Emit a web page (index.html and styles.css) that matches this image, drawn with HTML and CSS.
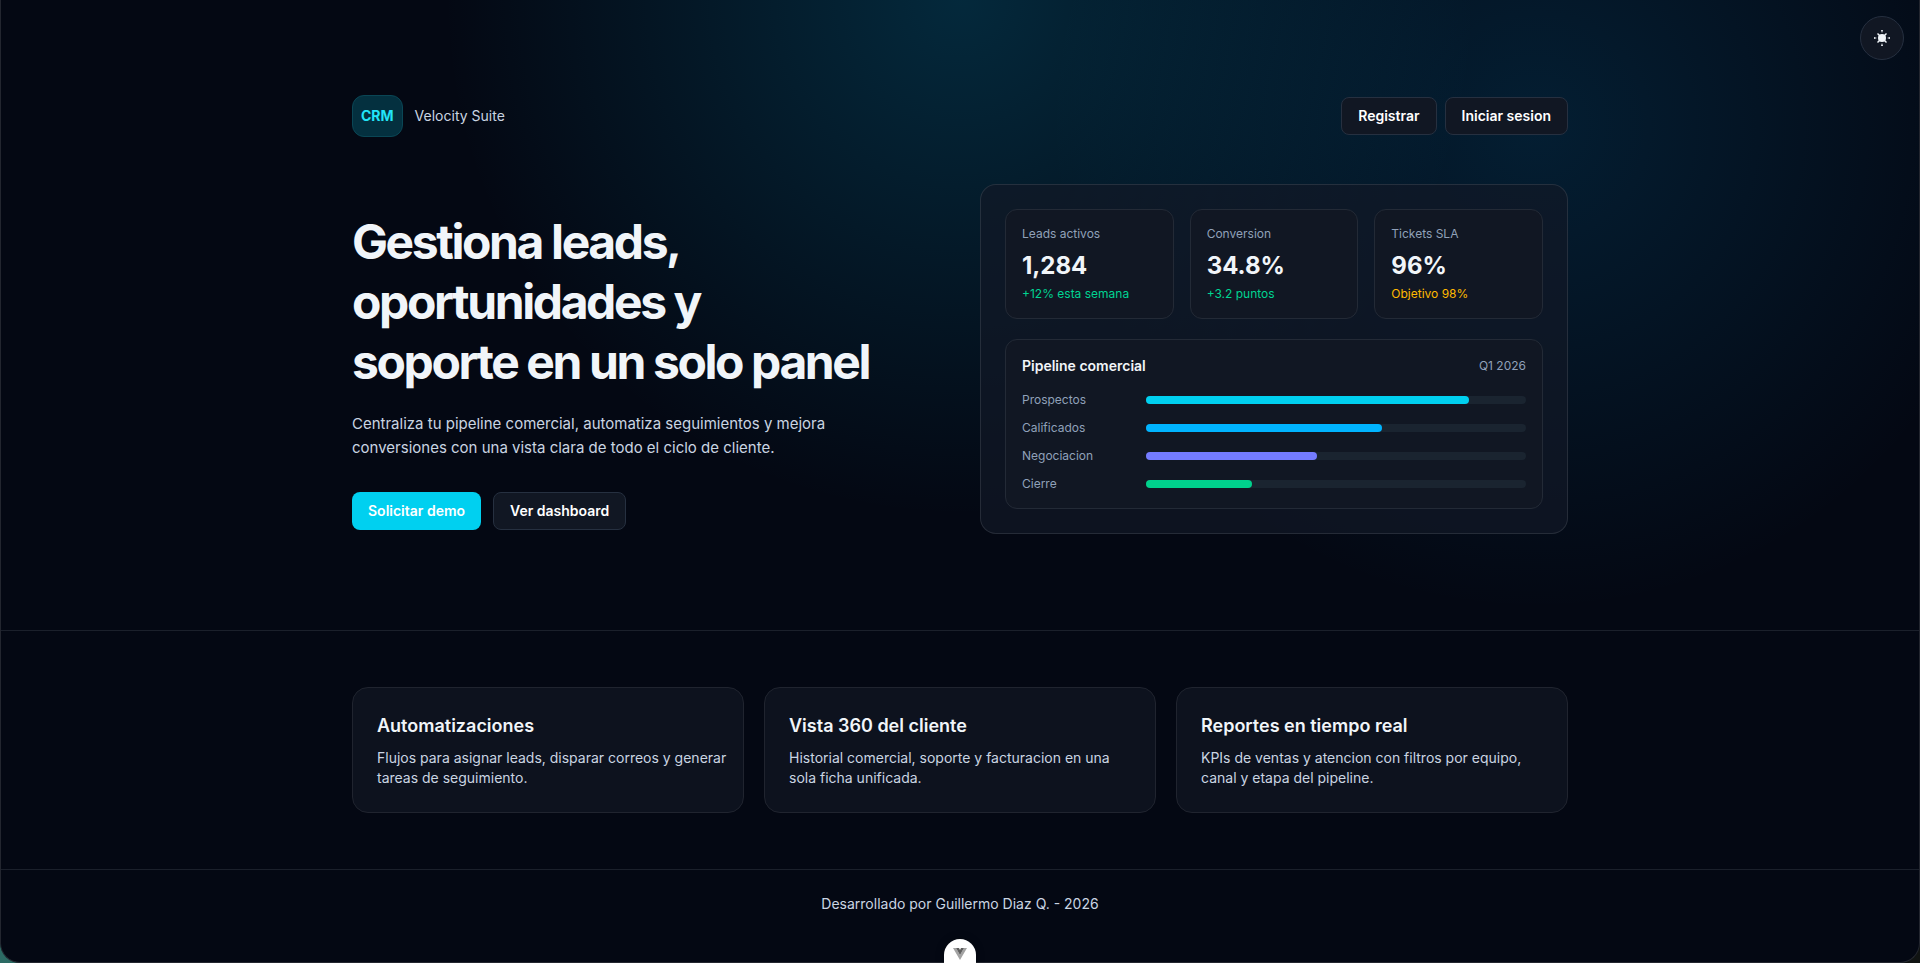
FILE: index.html
```html
<!DOCTYPE html>
<html lang="es">
<head>
    <meta charset="UTF-8">
    <meta name="viewport" content="width=device-width, initial-scale=1.0">
    <title>Velocity Suite CRM</title>
    <link rel="stylesheet" href="styles.css">
</head>
<body>
    <div class="page">
        <button class="theme-toggle" type="button" aria-label="Cambiar tema">
            <svg width="18" height="18" viewBox="0 0 18 18" fill="currentColor" aria-hidden="true">
                <circle cx="9" cy="9" r="4"/>
                <path d="M8 1h2l-1 3zM8 17h2l-1-3zM1 8v2l3-1zM17 8v2l-3-1zM4 5l1-1 2 2-1 1zM14 5l-1-1-2 2 1 1zM4 13l1 1 2-2-1-1zM14 13l-1 1-2-2 1-1z"/>
            </svg>
        </button>

        <section class="hero">
            <div class="container">
                <header class="header">
                    <div class="brand">
                        <span class="brand-badge">CRM</span>
                        <span class="brand-name">Velocity Suite</span>
                    </div>
                    <nav class="header-actions">
                        <a class="btn btn-outline" href="#">Registrar</a>
                        <a class="btn btn-outline" href="#">Iniciar sesion</a>
                    </nav>
                </header>

                <div class="hero-grid">
                    <div class="hero-text">
                        <h1>Gestiona leads, oportunidades y<br>soporte en un solo panel</h1>
                        <p>Centraliza tu pipeline comercial, automatiza seguimientos y mejora conversiones con una vista clara de todo el ciclo de cliente.</p>
                        <div class="hero-actions">
                            <button class="btn btn-primary" type="button">Solicitar demo</button>
                            <button class="btn btn-outline" type="button">Ver dashboard</button>
                        </div>
                    </div>

                    <div class="panel">
                        <div class="stats">
                            <div class="stat">
                                <p class="stat-label">Leads activos</p>
                                <p class="stat-value">1,284</p>
                                <p class="stat-note green">+12% esta semana</p>
                            </div>
                            <div class="stat">
                                <p class="stat-label">Conversion</p>
                                <p class="stat-value">34.8%</p>
                                <p class="stat-note green">+3.2 puntos</p>
                            </div>
                            <div class="stat">
                                <p class="stat-label">Tickets SLA</p>
                                <p class="stat-value">96%</p>
                                <p class="stat-note amber">Objetivo 98%</p>
                            </div>
                        </div>

                        <div class="pipeline">
                            <div class="pipeline-head">
                                <h2>Pipeline comercial</h2>
                                <span>Q1 2026</span>
                            </div>
                            <div class="pipeline-rows">
                                <div class="pipeline-row">
                                    <span class="row-label">Prospectos</span>
                                    <div class="track"><div class="bar cyan" style="width: 85%"></div></div>
                                </div>
                                <div class="pipeline-row">
                                    <span class="row-label">Calificados</span>
                                    <div class="track"><div class="bar sky" style="width: 62%"></div></div>
                                </div>
                                <div class="pipeline-row">
                                    <span class="row-label">Negociacion</span>
                                    <div class="track"><div class="bar indigo" style="width: 45%"></div></div>
                                </div>
                                <div class="pipeline-row">
                                    <span class="row-label">Cierre</span>
                                    <div class="track"><div class="bar emerald" style="width: 28%"></div></div>
                                </div>
                            </div>
                        </div>
                    </div>
                </div>
            </div>
        </section>

        <section class="features">
            <div class="container features-grid">
                <article class="feature">
                    <h3>Automatizaciones</h3>
                    <p>Flujos para asignar leads, disparar correos y generar tareas de seguimiento.</p>
                </article>
                <article class="feature">
                    <h3>Vista 360 del cliente</h3>
                    <p>Historial comercial, soporte y facturacion en una sola ficha unificada.</p>
                </article>
                <article class="feature">
                    <h3>Reportes en tiempo real</h3>
                    <p>KPIs de ventas y atencion con filtros por equipo, canal y etapa del pipeline.</p>
                </article>
            </div>
        </section>

        <footer class="footer">Desarrollado por Guillermo Diaz Q. - 2026</footer>

        <button class="devtools" type="button" aria-label="Vue DevTools">
            <svg width="14" height="12" viewBox="0 0 14 12" aria-hidden="true">
                <path fill="#a3a3a3" d="M0 0h3l4 7 4-7h3L7 12z"/>
                <path fill="#5f5f5f" d="M3 0h3l1 2 1-2h3L7 7z"/>
            </svg>
        </button>
    </div>
</body>
</html>
```

FILE: styles.css
```css
* {
    box-sizing: border-box;
}

body {
    margin: 0;
    font-family: Inter, 'Liberation Sans', sans-serif;
    font-size: 14px;
    line-height: 20px;
    color: #f1f5f9;
    background: linear-gradient(90deg, #2c6b64 0, #14201f 50%, #101312 100%);
}

h1,
h2,
h3,
p {
    margin: 0;
}

.page {
    display: flex;
    flex-direction: column;
    min-height: 100vh;
    background: #040813;
    border: 1px solid #23262f;
    border-top: 0;
    border-radius: 0 0 20px 20px;
    overflow: hidden;
}

.container {
    width: 100%;
    max-width: 1280px;
    margin: 0 auto;
    padding: 0 32px;
}

/* Hero */
.hero {
    padding: 95px 0 96px;
    border-bottom: 1px solid #1b202b;
    background:
        radial-gradient(circle at top, rgba(4, 172, 222, 0.2), transparent 45%),
        radial-gradient(circle at 80% 20%, rgba(2, 146, 214, 0.16), transparent 30%);
}

.header {
    display: flex;
    align-items: center;
    justify-content: space-between;
    margin-bottom: 47px;
}

.brand {
    display: flex;
    align-items: center;
    gap: 12px;
}

.brand-badge {
    padding: 8px;
    font-weight: 700;
    line-height: 24px;
    color: #22e4f8;
    background: #04303f;
    border: 1px solid #0a4655;
    border-radius: 12px;
}

.brand-name {
    color: #cad5e2;
}

.header-actions {
    display: flex;
    gap: 8px;
}

.btn {
    display: inline-block;
    padding: 8px 16px;
    font: inherit;
    font-weight: 600;
    color: #fff;
    text-decoration: none;
    border: 1px solid transparent;
    border-radius: 8px;
    cursor: pointer;
}

.btn-outline {
    background: #111723;
    border-color: #263040;
}

.btn-primary {
    padding: 9px 16px;
    background: #00d0f0;
    border: 0;
}

.hero-grid {
    display: grid;
    grid-template-columns: 1fr 1fr;
    gap: 40px;
    align-items: center;
}

.hero-text h1 {
    max-width: 560px;
    margin-top: 24px;
    font-size: 48px;
    font-weight: 700;
    line-height: 60px;
    letter-spacing: -0.05em;
}

.hero-text p {
    max-width: 512px;
    margin-top: 20px;
    font-size: 15px;
    line-height: 24px;
    color: #cad5e2;
}

.hero-actions {
    display: flex;
    gap: 12px;
    margin-top: 32px;
}

/* Panel */
.panel {
    padding: 24px;
    background: rgba(17, 24, 39, 0.7);
    border: 1px solid rgba(255, 255, 255, 0.1);
    border-radius: 16px;
}

.stats {
    display: grid;
    grid-template-columns: repeat(3, 1fr);
    gap: 16px;
}

.stat,
.pipeline {
    padding: 16px;
    background: #111723;
    border: 1px solid #232a36;
    border-radius: 12px;
}

.stat-label,
.stat-note {
    font-size: 12px;
    line-height: 16px;
}

.stat-label {
    color: #90a1b9;
}

.stat-value {
    margin: 8px 0 4px;
    font-size: 24px;
    font-weight: 700;
    line-height: 32px;
}

.green {
    color: #00d492;
}

.amber {
    color: #ffb900;
}

.pipeline {
    margin-top: 20px;
}

.pipeline-head {
    display: flex;
    align-items: center;
    justify-content: space-between;
    margin-bottom: 16px;
}

.pipeline-head h2 {
    font-size: 14px;
    font-weight: 600;
}

.pipeline-head span,
.pipeline-row {
    font-size: 12px;
    line-height: 16px;
    color: #90a1b9;
}

.pipeline-rows {
    display: grid;
    gap: 12px;
}

.pipeline-row {
    display: flex;
    align-items: center;
    gap: 12px;
}

.row-label {
    width: 112px;
}

.track {
    flex: 1;
    height: 8px;
    background: #1a2430;
    border-radius: 4px;
}

.bar {
    height: 100%;
    border-radius: 4px;
}

.cyan {
    background: #00d0f0;
}

.sky {
    background: #00b4ff;
}

.indigo {
    background: #747bff;
}

.emerald {
    background: #00d18c;
}

/* Features */
.features {
    padding: 56px 0;
    border-bottom: 1px solid #1b202b;
}

.features-grid {
    display: grid;
    grid-template-columns: repeat(3, 1fr);
    gap: 20px;
}

.feature {
    padding: 24px 16px 24px 24px;
    background: #0d121e;
    border: 1px solid #20242f;
    border-radius: 16px;
}

.feature h3 {
    font-size: 18px;
    font-weight: 600;
    line-height: 28px;
}

.feature p {
    margin-top: 8px;
    color: #cad5e2;
}

.footer {
    padding: 24px;
    text-align: center;
    color: #cad5e2;
}

/* Floating buttons */
.theme-toggle {
    position: fixed;
    top: 16px;
    right: 16px;
    display: flex;
    align-items: center;
    justify-content: center;
    width: 44px;
    height: 44px;
    padding: 0;
    color: #f1f5f9;
    background: #111723;
    border: 1px solid #263040;
    border-radius: 50%;
    cursor: pointer;
}

.devtools {
    position: fixed;
    bottom: 0;
    left: 50%;
    display: flex;
    justify-content: center;
    width: 32px;
    height: 24px;
    margin-left: -16px;
    padding: 9px 0 0;
    background: #fff;
    border: 0;
    border-radius: 16px 16px 0 0;
    box-shadow: 0 0 8px rgba(0, 0, 0, 0.3);
    cursor: pointer;
}

@media (max-width: 900px) {
    .hero-grid,
    .features-grid {
        grid-template-columns: 1fr;
    }
}
```
